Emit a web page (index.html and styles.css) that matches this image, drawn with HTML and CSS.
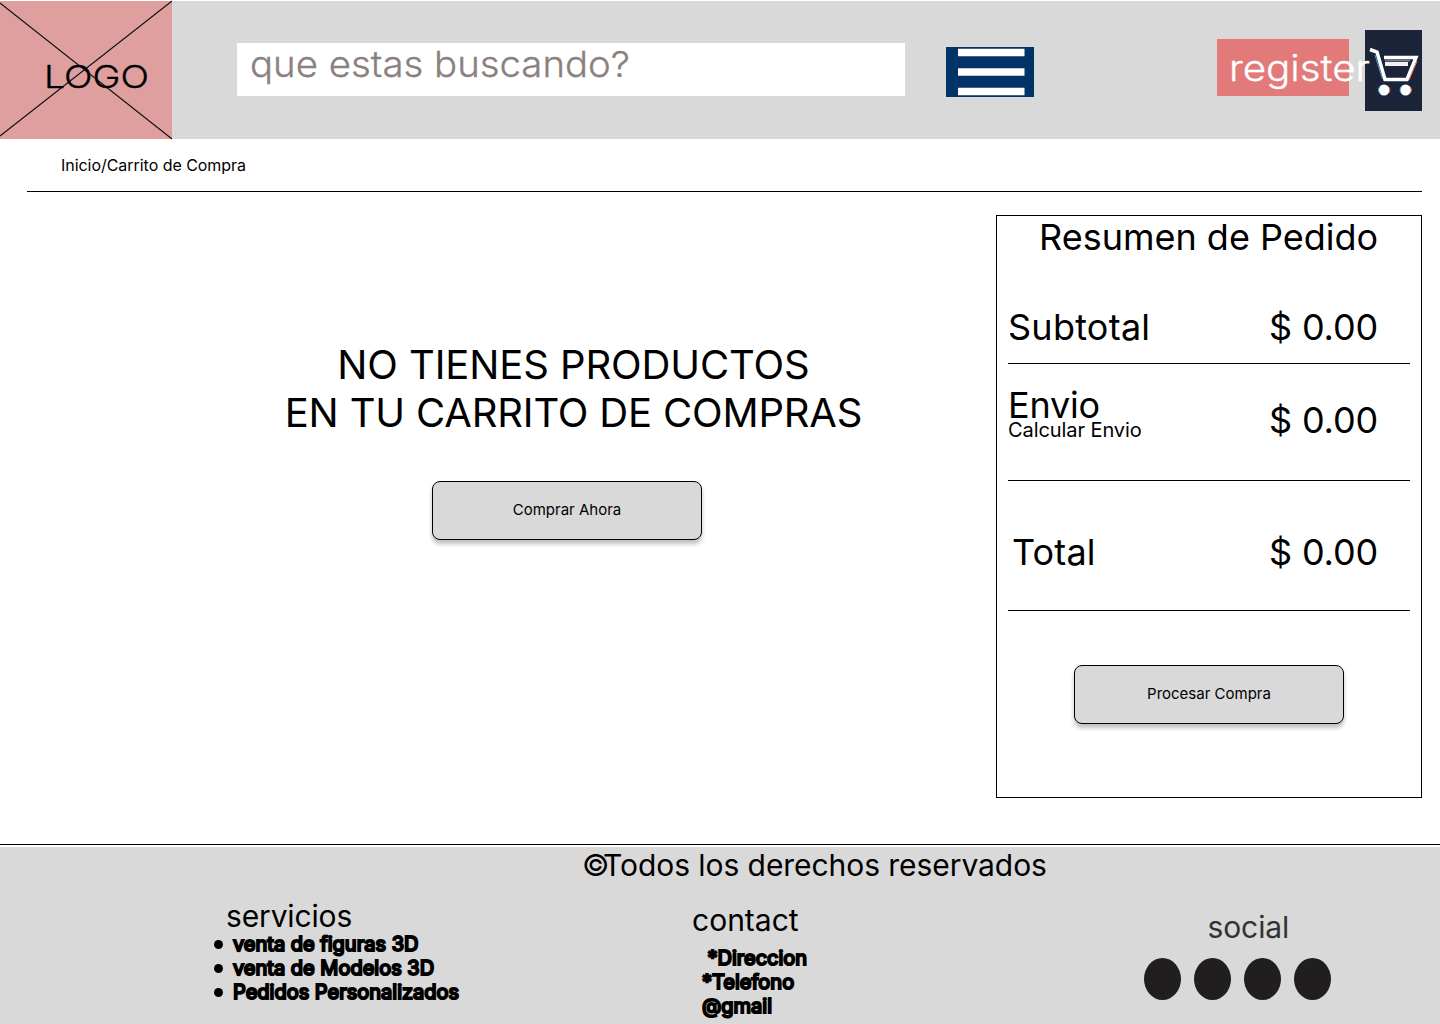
FILE: index.html
```html
<!DOCTYPE html>
<html lang="es">
<head>
<meta charset="utf-8">
<title>Carrito de Compra</title>
<link rel="stylesheet" href="styles.css">
</head>
<body>
<header class="header">
  <svg class="logo" viewBox="0 0 172 138">
    <path d="M0 2L172 138M0 135L172 0" stroke="#111" stroke-width="1.1" fill="none"/>
    <text class="wide-text logo-text" x="44" y="86.500" font-size="31" textLength="105" lengthAdjust="spacingAndGlyphs">LOGO</text>
  </svg>
  <div class="search">
    <svg class="search-text" width="400" height="53"><text class="wide-text hint" x="13" y="34" font-size="36" textLength="380" lengthAdjust="spacingAndGlyphs">que estas buscando?</text></svg>
  </div>
  <svg class="menu" viewBox="0 0 88 50"><path d="M12 5.5H78.500M12 25H78.500M12 44.500H78.500" stroke="#fff" stroke-width="7.600"/></svg>
  <div class="register">
    <svg class="register-text" width="132" height="57"><text class="wide-text light" x="12" y="42" font-size="36" textLength="141" lengthAdjust="spacingAndGlyphs">register</text></svg>
  </div>
  <svg class="cart" viewBox="0 0 57 81">
    <g fill="none" stroke="#fff" stroke-width="3.500">
      <path d="M5 19.500L12 22L20 49.500H42L51 27.500H19"/>
      <path d="M20 34H43" stroke="#f4f0f4" stroke-width="4"/>
      <path d="M20 30.500H45" stroke="#777d90" stroke-width="2"/>
    </g>
    <path d="M10 25L17.500 49" stroke="#49a5df" stroke-width="1"/>
    <path d="M52 31L44 50" stroke="#e78b51" stroke-width="1"/>
    <g fill="#fff"><circle cx="19" cy="60" r="5.500"/><circle cx="40.500" cy="60" r="5.500"/></g>
    <g fill="none" stroke-width="1"><path d="M15 56.500A5 5 0 0 0 15 63.500M36.500 56.500A5 5 0 0 0 36.500 63.500" stroke="#49a5df"/><path d="M23.500 56.500A5 5 0 0 1 23.500 63.500M45 56.500A5 5 0 0 1 45 63.500" stroke="#d9784f"/></g>
  </svg>
</header>
<nav class="crumbs"><span class="crumb-text">Inicio/Carrito de Compra</span></nav>
<main class="main">
  <section class="empty">
    <h1 class="empty-title"><span class="line-a">NO TIENES PRODUCTOS</span><br><span class="line-b">EN TU CARRITO DE COMPRAS</span></h1>
    <button class="btn"><span class="buy-text">Comprar Ahora</span></button>
  </section>
  <aside class="summary">
    <h2 class="summary-title">Resumen de Pedido</h2>
    <div class="row row-sub"><span class="label-sub">Subtotal</span><span class="price">$ 0.00</span></div>
    <div class="row row-ship"><div class="ship"><div class="ship-title">Envio</div><div class="ship-calc">Calcular Envio</div></div><span class="price">$ 0.00</span></div>
    <div class="row row-total"><span class="label-total">Total</span><span class="price">$ 0.00</span></div>
    <button class="btn btn-pay"><span class="pay-text">Procesar Compra</span></button>
  </aside>
</main>
<footer class="footer">
  <div class="rights"><span class="copy">©</span><span class="rights-text">Todos los derechos reservados</span></div>
  <div class="columns">
    <section class="services">
      <h3 class="foot-title services-title">servicios</h3>
      <ul class="list"><li><span class="s1">venta de figuras 3D</span></li><li><span class="s2">venta de Modelos 3D</span></li><li><span class="s3">Pedidos Personalizados</span></li></ul>
    </section>
    <section class="contact">
      <h3 class="foot-title contact-title">contact</h3>
      <div class="list contact-list"><div class="address">*Direccion</div><div class="phone">*Telefono</div><div class="mail">@gmail</div></div>
    </section>
    <section class="social">
      <h3 class="foot-title social-title">social</h3>
      <div class="dots"><i class="dot"></i><i class="dot"></i><i class="dot"></i><i class="dot"></i></div>
    </section>
  </div>
</footer>
</body>
</html>
```
FILE: styles.css
```css
* { box-sizing: border-box; }
body { margin: 0; width: 1440px; height: 1024px; overflow: hidden; background: #fff; color: #000; font-family: Inter, sans-serif; font-weight: 400; white-space: nowrap; }
h1, h2, h3, ul { margin: 0; padding: 0; font-weight: 400; }
svg { display: block; overflow: visible; flex: none; }
.header { display: flex; align-items: flex-start; height: 138px; margin-top: 1px; padding-right: 18px; background: #d9d9d9; }
.logo { width: 172px; height: 138px; background: #df9f9f; }
.wide-text { font-family: Inter, sans-serif; font-weight: 300; fill: #000; stroke: #000; stroke-width: .3px; }
.hint { fill: #8b8080; stroke: #8b8080; }
.light { fill: #fff; stroke: #fff; }
.search { width: 668px; height: 53px; margin: 42px 0 0 65px; background: #fff; }
.menu { width: 88px; height: 50px; margin: 46px 0 0 41px; background: #003366; }
.register { position: relative; z-index: 1; width: 132px; height: 57px; margin: 38.400px 16px 0 auto; background: #e27a7a; }
.cart { width: 57px; height: 81px; margin-top: 29px; background: #1c2439; }
.crumbs { height: 53px; margin: 0 18px 0 27px; padding-left: 34px; border-bottom: 1px solid #000; font-size: 16px; line-height: 53px; letter-spacing: -.04px; }
.main { display: flex; height: 652px; }
.empty { width: 996px; padding: 149px 0 0 285px; }
.empty-title { width: 577px; text-align: center; font-size: 40px; line-height: 48px; letter-spacing: -.1px; }
.line-b { margin: 0 -4px; letter-spacing: -.17px; }
.btn { display: block; width: 270px; height: 59px; margin: 44px 0 0 147px; padding: 0 0 2px; border: 1px solid #000; border-radius: 8px; background: #d9d9d9; box-shadow: 0 4px 4px rgba(0,0,0,.25); color: #000; font: 400 15px/54px Inter, sans-serif; text-align: center; }
.summary { width: 426px; height: 583px; margin-top: 23px; padding: 0 11px; border: 1px solid #000; font-size: 36px; }
.summary-title { height: 44px; padding-left: 31px; font-size: 36px; line-height: 42px; }
.row { display: flex; justify-content: space-between; padding-right: 32px; border-bottom: 1px solid #000; line-height: 44px; }
.row-sub { height: 104px; padding-top: 45px; }
.row-ship { height: 117px; padding-top: 34px; }
.row-total { height: 130px; padding-top: 49px; }
.label-sub { letter-spacing: .25px; }
.label-total { padding-left: 4px; letter-spacing: .15px; }
.price { letter-spacing: -.15px; }
.ship-title { line-height: 14px; letter-spacing: -.2px; }
.ship-calc { font-size: 20px; line-height: 36px; letter-spacing: -.08px; }
.btn-pay { margin: 54px auto 0; }
.footer { height: 180px; border-top: 1px solid #000; background: #d9d9d9; box-shadow: inset 0 2px #fff; }
.rights { display: flex; padding-left: 582px; height: 42px; font-size: 30px; line-height: 40px; }
.copy { width: 21px; }
.rights-text { letter-spacing: -.06px; }
.columns { display: flex; }
.services { width: 692px; padding: 10px 0 0 213px; }
.foot-title { font-size: 30px; line-height: 36px; }
.services-title { height: 36px; padding-left: 13px; line-height: 38px; letter-spacing: -.15px; }
.list { list-style: none; font-size: 20px; line-height: 24px; -webkit-text-stroke: 2px #000; }
.services .list { margin-top: -1px; }
.list li { display: flex; align-items: center; gap: 10px; }
.list li::before { content: ""; width: 9px; height: 9px; margin-left: 1px; border-radius: 50%; background: #000; }
.contact { width: 451.500px; padding-top: 15px; }
.contact-list { padding: 8px 0 0 10px; }
.address { padding-left: 5.500px; }
.social { padding-top: 22px; }
.social-title { padding-left: 64px; color: #333; letter-spacing: -.1px; }
.dots { display: flex; gap: 13.300px; margin-top: 13px; }
.dot { width: 37px; height: 42px; border-radius: 50%; background: #201e1f; }
```
